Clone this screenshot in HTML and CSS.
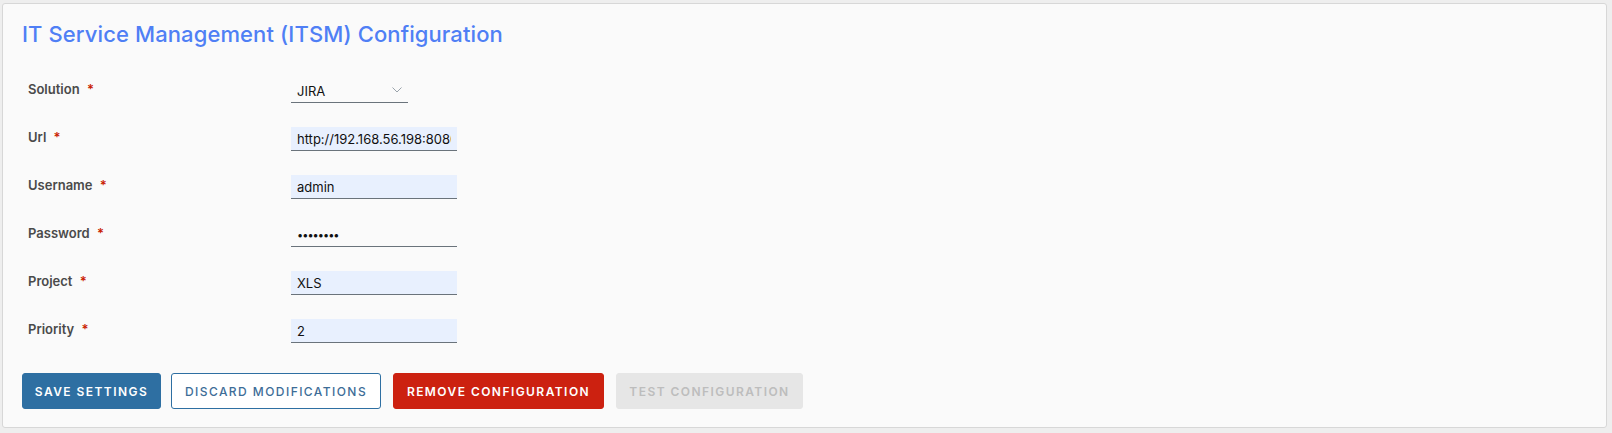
FILE: index.html
```html
<!DOCTYPE html>
<html lang="en">
<head>
<meta charset="utf-8">
<title>ITSM Configuration</title>
<link rel="stylesheet" href="styles.css">
</head>
<body>
<div class="card">
  <h2 class="title">IT Service Management (ITSM) Configuration</h2>
  <form class="form">
    <div class="row">
      <label class="label">Solution <span class="req">*</span></label>
      <div class="select-wrap">
        <select class="select"><option>JIRA</option></select>
        <svg class="chev" width="10" height="6" viewBox="0 0 10 6"><path d="M0.5 0.5 L5 5 L9.5 0.5" fill="none" stroke="#9aa3ab" stroke-width="1"/></svg>
      </div>
    </div>
    <div class="row">
      <label class="label">Url <span class="req">*</span></label>
      <input class="input filled" type="text" value="http://192.168.56.198:8080">
    </div>
    <div class="row">
      <label class="label">Username <span class="req">*</span></label>
      <input class="input filled" type="text" value="admin">
    </div>
    <div class="row">
      <label class="label">Password <span class="req">*</span></label>
      <input class="input pw" type="password" value="password">
    </div>
    <div class="row">
      <label class="label">Project <span class="req">*</span></label>
      <input class="input filled" type="text" value="XLS">
    </div>
    <div class="row">
      <label class="label">Priority <span class="req">*</span></label>
      <input class="input filled" type="text" value="2">
    </div>
  </form>
  <div class="actions">
    <button class="btn btn-primary" type="button">Save Settings</button>
    <button class="btn btn-outline" type="button">Discard Modifications</button>
    <button class="btn btn-danger" type="button">Remove Configuration</button>
    <button class="btn btn-disabled" type="button" disabled>Test Configuration</button>
  </div>
</div>
</body>
</html>
```
FILE: styles.css
```css
html, body {
  margin: 0;
  padding: 0;
}
body {
  background: #eeeeee;
  font-family: Inter, "Open Sans", sans-serif;
  padding: 3px 5px 5px 2px;
}
.card {
  background: #fafafa;
  border: 1px solid #d7d7d7;
  border-radius: 3px;
  height: 425px;
  box-sizing: border-box;
  padding: 14px 19px 0 19px;
}
.title {
  margin: 0;
  font-size: 22px;
  line-height: 32px;
  font-weight: 500;
  color: #4f7ff5;
  letter-spacing: 0.1px;
}
.form {
  margin: 17px 0 0 6px;
}
.row {
  display: grid;
  grid-template-columns: 263px auto;
  align-items: center;
  height: 48px;
  justify-items: start;
}
.label {
  font-size: 13px;
  font-weight: 600;
  color: #4a4a4a;
  margin-top: -4px;
}
.req {
  color: #c92100;
  margin-left: 4px;
}
.select-wrap {
  position: relative;
  width: 117px;
}
.select {
  appearance: none;
  -webkit-appearance: none;
  width: 117px;
  height: 24px;
  border: none;
  border-bottom: 1px solid #6a737b;
  background: transparent;
  font-family: inherit;
  font-size: 13px;
  color: #111;
  padding: 0 6px;
  margin: 0;
  border-radius: 0;
  outline: none;
}
.chev {
  position: absolute;
  right: 6px;
  top: 8px;
}
.input {
  width: 166px;
  height: 24px;
  box-sizing: border-box;
  border: none;
  border-bottom: 1px solid #6a737b;
  background: transparent;
  font-family: inherit;
  font-size: 13px;
  color: #111;
  padding: 0 6px;
  margin: 0;
  border-radius: 0;
  outline: none;
}
.input.filled {
  background: #e8f0fe;
}
.input.pw {
  font-size: 11px;
  letter-spacing: -1px;
}
.actions {
  display: flex;
  gap: 10px;
  margin-top: 18px;
  padding-left: 0;
}
.btn {
  height: 36px;
  box-sizing: border-box;
  padding: 0;
  border-radius: 3px;
  font-family: inherit;
  font-size: 12px;
  font-weight: 600;
  letter-spacing: 0.12em;
  text-transform: uppercase;
  white-space: nowrap;
  border: 1px solid transparent;
  cursor: pointer;
}
.btn-primary {
  background: #2e6fa2;
  border-color: #2e6fa2;
  color: #ffffff;
  width: 139px;
}
.btn-outline {
  background: #ffffff;
  border-color: #2e6fa2;
  color: #3d6d97;
  width: 210px;
  font-weight: 500;
}
.btn-danger {
  background: #cc2110;
  border-color: #cc2110;
  color: #ffffff;
  width: 211px;
  margin-left: 2px;
}
.btn-disabled {
  background: #e6e6e6;
  border-color: #e6e6e6;
  color: #bdbdbd;
  width: 187px;
  margin-left: 2px;
  cursor: default;
}
```
